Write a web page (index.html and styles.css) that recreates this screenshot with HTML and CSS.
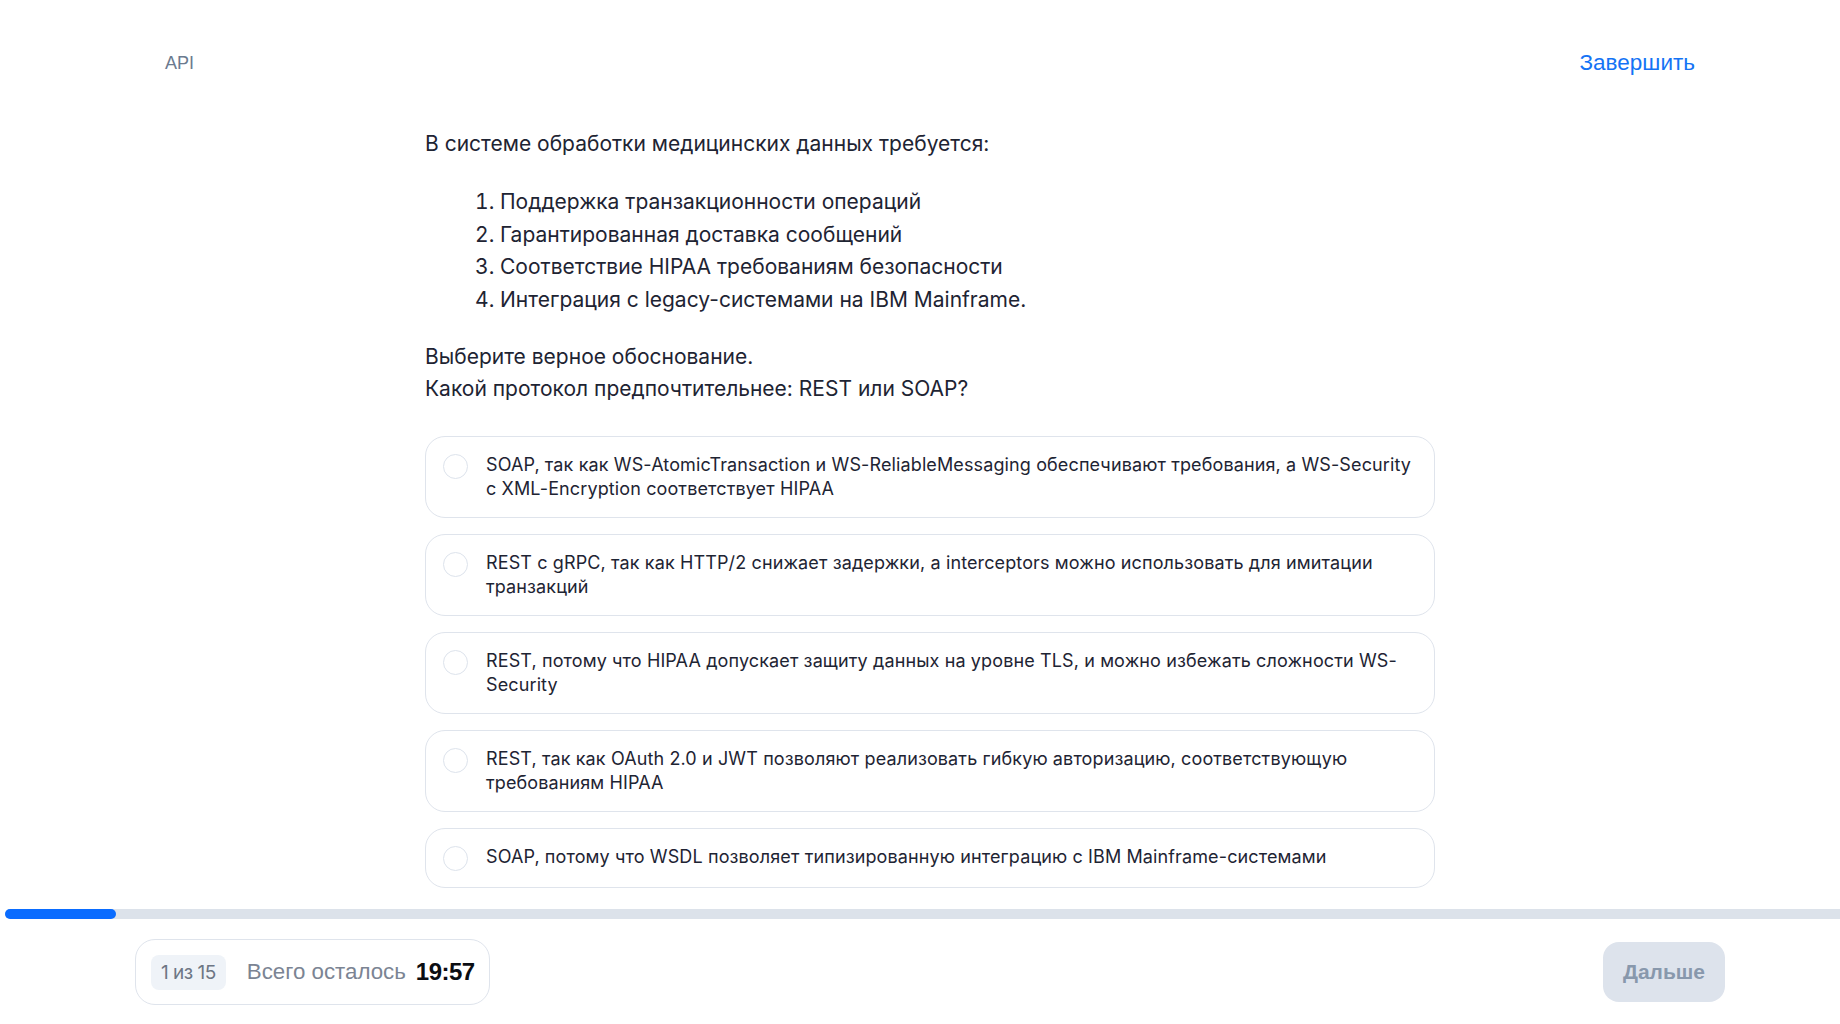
FILE: index.html
```html
<!DOCTYPE html>
<html lang="ru">
<head>
<meta charset="utf-8">
<title>API — тест</title>
<link rel="stylesheet" href="styles.css">
</head>
<body>
<div class="page">
  <header class="topbar">
    <span class="section-name">API</span>
    <a class="finish-link" href="#">Завершить</a>
  </header>

  <main class="question">
    <p class="q-intro">В системе обработки медицинских данных требуется:</p>
    <ol class="q-list">
      <li>Поддержка транзакционности операций</li>
      <li>Гарантированная доставка сообщений</li>
      <li>Соответствие HIPAA требованиям безопасности</li>
      <li>Интеграция с legacy-системами на IBM Mainframe.</li>
    </ol>
    <p class="q-ask">Выберите верное обоснование.<br>Какой протокол предпочтительнее: REST или SOAP?</p>

    <div class="options">
      <label class="option"><span class="radio"></span><span class="opt-text">SOAP, так как WS-AtomicTransaction и WS-ReliableMessaging обеспечивают требования, а WS-Security с XML-Encryption соответствует HIPAA</span></label>
      <label class="option"><span class="radio"></span><span class="opt-text">REST с gRPC, так как HTTP/2 снижает задержки, а interceptors можно использовать для имитации транзакций</span></label>
      <label class="option"><span class="radio"></span><span class="opt-text">REST, потому что HIPAA допускает защиту данных на уровне TLS, и можно избежать сложности WS-Security</span></label>
      <label class="option"><span class="radio"></span><span class="opt-text">REST, так как OAuth 2.0 и JWT позволяют реализовать гибкую авторизацию, соответствующую требованиям HIPAA</span></label>
      <label class="option"><span class="radio"></span><span class="opt-text">SOAP, потому что WSDL позволяет типизированную интеграцию с IBM Mainframe-системами</span></label>
    </div>
  </main>
</div>

<div class="progress"><div class="progress-fill" style="width:111px"></div></div>

<footer class="bottombar">
  <div class="status-pill">
    <span class="counter">1 из 15</span>
    <span class="remaining">Всего осталось</span>
    <span class="timer">19:57</span>
  </div>
  <button class="next-btn" type="button">Дальше</button>
</footer>
</body>
</html>
```

FILE: styles.css
```css
* { box-sizing: border-box; }

html, body {
  margin: 0;
  padding: 0;
  background: #ffffff;
}

body {
  font-family: Inter, "Noto Sans", sans-serif;
  color: #1e2433;
  width: 1840px;
  height: 1024px;
  overflow: hidden;
}

.page {
  margin-left: 135px;
  width: 1590px;
}

.topbar {
  display: flex;
  justify-content: space-between;
  align-items: center;
  padding: 50px 30px 0 30px;
  height: 76px;
  font-family: "Liberation Sans", Arial, sans-serif;
}

.section-name {
  color: #6b7a8f;
  font-size: 18px;
}

.finish-link {
  color: #1473f5;
  text-decoration: none;
  font-size: 22.5px;
}

.question {
  width: 1010px;
  margin: 0 auto;
  padding-top: 52px;
  font-size: 21px;
  line-height: 32px;
}

.q-intro {
  margin: 0;
}

.q-list {
  margin: 26px 0 0 0;
  padding-left: 75px;
  line-height: 32.5px;
}

.q-ask {
  margin: 25px 0 0 0;
}

.options {
  margin-top: 31px;
  display: flex;
  flex-direction: column;
  gap: 16px;
}

.option {
  display: flex;
  align-items: flex-start;
  gap: 18px;
  border: 1px solid #dfe4ec;
  border-radius: 20px;
  padding: 16px 18px 16px 17px;
  font-size: 18px;
  line-height: 24px;
  letter-spacing: 0.12px;
  cursor: pointer;
}

.radio {
  flex: none;
  width: 25px;
  height: 25px;
  margin-top: 1px;
  border: 1.5px solid #dde3ec;
  border-radius: 50%;
  background: #fff;
}

.opt-text {
  flex: 1;
}

.progress {
  margin-left: 5px;
  margin-top: 21px;
  height: 10px;
  background: #dce2ea;
  border-radius: 5px 0 0 5px;
}

.progress-fill {
  height: 10px;
  background: #0a6cff;
  border-radius: 5px;
}

.bottombar {
  display: flex;
  justify-content: space-between;
  align-items: center;
  margin-left: 135px;
  width: 1590px;
  margin-top: 20px;
}

.status-pill {
  display: flex;
  align-items: center;
  height: 66px;
  padding: 0 14px 0 15px;
  border: 1px solid #dfe4ec;
  border-radius: 20px;
}

.counter {
  display: inline-flex;
  align-items: center;
  height: 35px;
  padding: 0 10px;
  background: #eff3f8;
  border-radius: 8px;
  color: #6d7684;
  font-size: 19px;
  letter-spacing: -0.5px;
}

.remaining {
  margin-left: 21px;
  font-family: "Liberation Sans", Arial, sans-serif;
  font-size: 22.3px;
  color: #7b8493;
}

.timer {
  margin-left: 10px;
  font-family: "Liberation Sans", Arial, sans-serif;
  font-size: 24px;
  font-weight: 700;
  color: #0b0d12;
  letter-spacing: -0.5px;
}

.next-btn {
  width: 122px;
  height: 60px;
  border: none;
  border-radius: 16px;
  background: #dde3ec;
  color: #8898ac;
  font-family: "Liberation Sans", Arial, sans-serif;
  font-size: 21px;
  font-weight: 700;
  cursor: pointer;
}
```
